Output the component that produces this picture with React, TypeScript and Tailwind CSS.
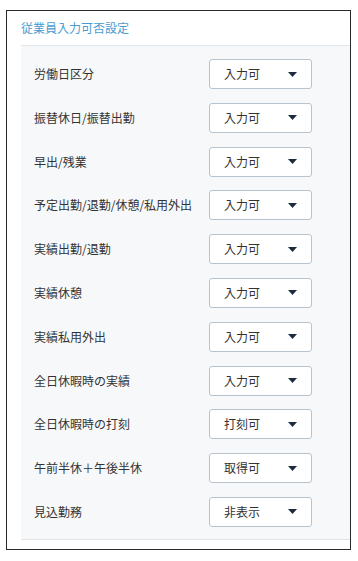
const rows: { label: string; value: string }[] = [
  { label: "労働日区分", value: "入力可" },
  { label: "振替休日/振替出勤", value: "入力可" },
  { label: "早出/残業", value: "入力可" },
  { label: "予定出勤/退勤/休憩/私用外出", value: "入力可" },
  { label: "実績出勤/退勤", value: "入力可" },
  { label: "実績休憩", value: "入力可" },
  { label: "実績私用外出", value: "入力可" },
  { label: "全日休暇時の実績", value: "入力可" },
  { label: "全日休暇時の打刻", value: "打刻可" },
  { label: "午前半休＋午後半休", value: "取得可" },
  { label: "見込勤務", value: "非表示" },
]

function SelectBox({ value }: { value: string }) {
  return (
    <div className="flex h-[30px] w-[103px] items-center justify-between rounded-[3px] border border-[#b7c4cf] bg-white pl-[14px] pr-[14px]">
      <span className="text-[12px] text-[#333]">{value}</span>
      <svg width="9" height="5" viewBox="0 0 9 5" className="text-[#1c2b3d]">
        <path d="M0 0h9L4.5 5z" fill="currentColor" />
      </svg>
    </div>
  )
}

export default function App() {
  return (
    <div
      className="h-[561px] w-[358px] bg-white pl-[6px] pt-[10px]"
      style={{ fontFamily: '"Noto Sans CJK JP", "Noto Sans", sans-serif' }}
    >
      <div className="h-[540px] w-[345px] border border-[#2a2a2a] pl-[14px]">
        <div className="flex h-[34px] items-center">
          <p className="text-[12px] text-[#4b9bd1]">従業員入力可否設定</p>
        </div>
        <section className="border-y border-[#e0e5ea] bg-[#f7f8fa] pb-[12px] pl-[13px] pt-[13px]">
          <div className="flex flex-col gap-y-[13.8px]">
            {rows.map((row) => (
              <div key={row.label} className="flex items-center">
                <span className="w-[175px] text-[12px] text-[#333]">
                  {row.label}
                </span>
                <SelectBox value={row.value} />
              </div>
            ))}
          </div>
        </section>
      </div>
    </div>
  )
}
